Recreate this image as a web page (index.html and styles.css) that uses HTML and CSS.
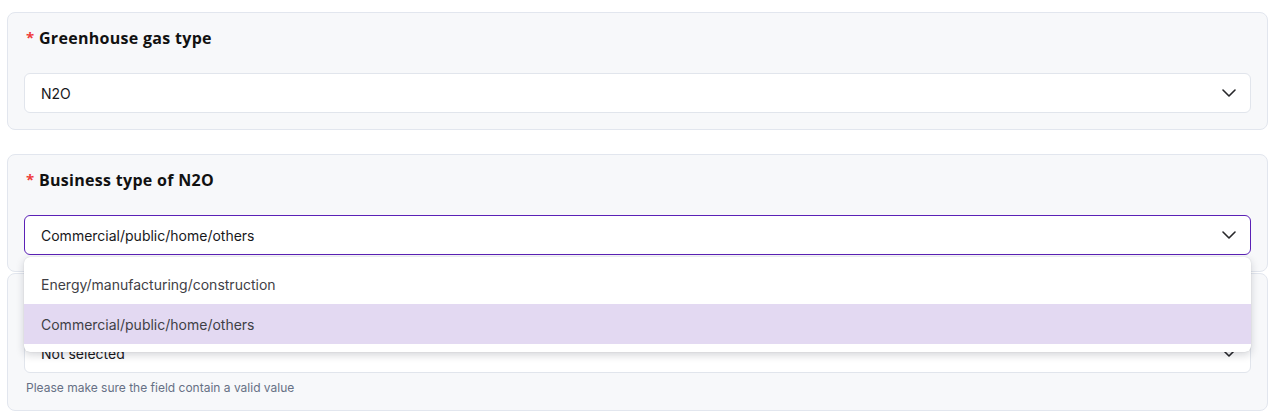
FILE: index.html
```html
<!DOCTYPE html>
<html lang="en">
<head>
<meta charset="utf-8">
<title>Form</title>
<link rel="stylesheet" href="styles.css">
</head>
<body>
<div class="page">
  <section class="card">
    <div class="label"><span class="req">*</span> Greenhouse gas type</div>
    <div class="select">
      <span class="value">N2O</span>
      <svg class="chev" width="14" height="8" viewBox="0 0 14 8"><path d="M1 1l6 6 6-6" fill="none" stroke="#27272a" stroke-width="1.6" stroke-linecap="round" stroke-linejoin="round"/></svg>
    </div>
  </section>

  <section class="card card-2">
    <div class="label"><span class="req">*</span> Business type of N2O</div>
    <div class="select-wrap">
      <div class="select open">
        <span class="value">Commercial/public/home/others</span>
        <svg class="chev" width="14" height="8" viewBox="0 0 14 8"><path d="M1 1l6 6 6-6" fill="none" stroke="#27272a" stroke-width="1.6" stroke-linecap="round" stroke-linejoin="round"/></svg>
      </div>
      <ul class="menu">
        <li class="option">Energy/manufacturing/construction</li>
        <li class="option active">Commercial/public/home/others</li>
      </ul>
    </div>
  </section>

  <section class="card card-3">
    <div class="label-space"></div>
    <div class="select">
      <span class="value">Not selected</span>
      <svg class="chev" width="14" height="8" viewBox="0 0 14 8"><path d="M1 1l6 6 6-6" fill="none" stroke="#27272a" stroke-width="1.6" stroke-linecap="round" stroke-linejoin="round"/></svg>
    </div>
    <div class="help">Please make sure the field contain a valid value</div>
  </section>
</div>
</body>
</html>
```

FILE: styles.css
```css
* { box-sizing: border-box; }
html, body { margin: 0; padding: 0; background: #ffffff; }
body { font-family: Inter, "Liberation Sans", sans-serif; color: #18181b; }

.page {
  padding: 12px 7px 0 7px;
  display: flex;
  flex-direction: column;
}

.card {
  background: #f7f8fa;
  border: 1px solid #e2e6ee;
  border-radius: 8px;
  padding: 13px 16px 16px 16px;
}
.card-2 { margin-top: 24px; position: relative; z-index: 2; }
.card-3 { margin-top: 1px; padding-bottom: 15px; }

.label {
  font-family: "Open Sans", "Liberation Sans", sans-serif;
  font-weight: 700;
  font-size: 16px;
  line-height: 24px;
  letter-spacing: 0.3px;
  color: #111111;
  padding-left: 2px;
  margin-bottom: 23px;
}
.label-space { height: 24px; margin-bottom: 22px; }
.req { color: #ef3b3b; font-size: 15px; position: relative; top: -1px; }

.select-wrap { position: relative; }

.select {
  height: 40px;
  background: #ffffff;
  border: 1px solid #e1e5ec;
  border-radius: 6px;
  display: flex;
  align-items: center;
  justify-content: space-between;
  padding: 0 14px 0 16px;
  font-size: 14px;
  color: #18181b;
}
.select.open { border-color: #5b21b6; }
.chev { display: block; }

.menu {
  position: absolute;
  left: 0;
  right: 0;
  top: 42px;
  margin: 0;
  padding: 7px 0 8px 0;
  list-style: none;
  background: #ffffff;
  border-radius: 6px;
  box-shadow: 0 3px 8px rgba(15, 23, 42, 0.18), 0 0 1px rgba(15, 23, 42, 0.2);
}
.option {
  height: 40px;
  display: flex;
  align-items: center;
  padding-left: 17px;
  font-size: 14px;
  color: #3f3f46;
}
.option.active { background: #e3d9f2; }

.help {
  margin-top: 8px;
  padding-left: 2px;
  font-size: 12px;
  line-height: 14px;
  color: #667085;
}
```
